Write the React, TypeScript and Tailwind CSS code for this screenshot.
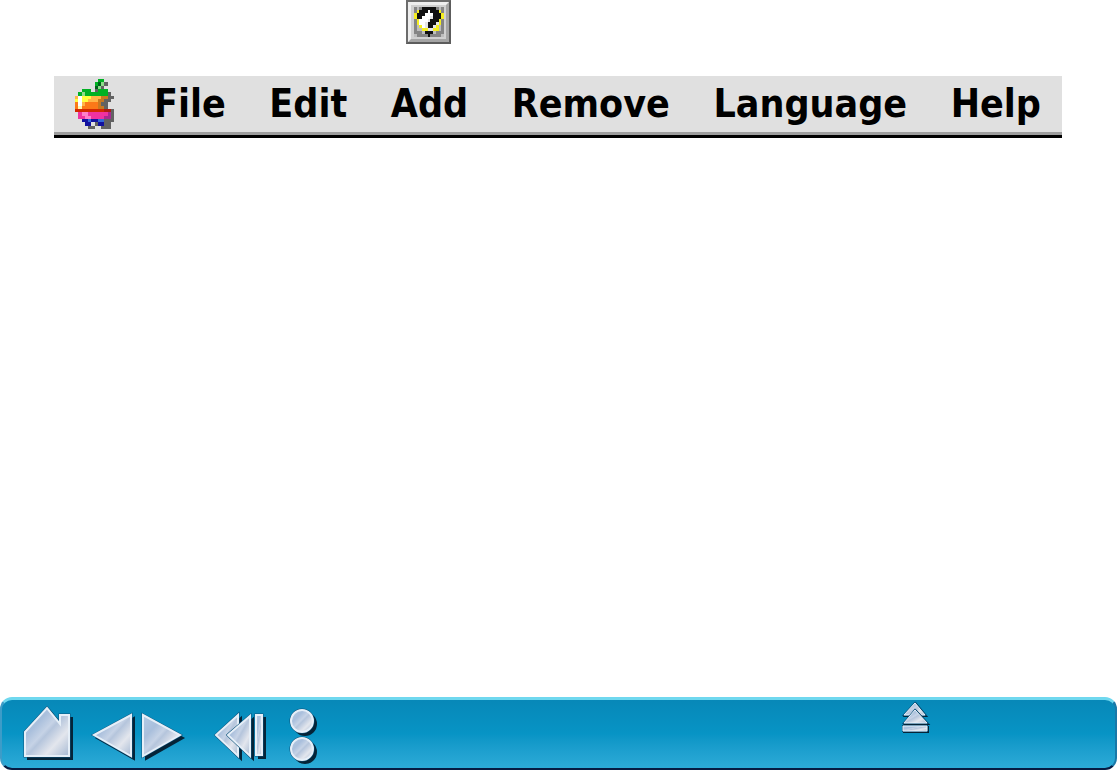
import type { ReactNode } from "react";

const palette: Record<string, string> = {
  G: "#00b123",
  D: "#00601a",
  L: "#8edb8a",
  K: "#626262",
  Y: "#ffff3c",
  y: "#fff9b0",
  W: "#ffffff",
  o: "#ffb545",
  O: "#fc7818",
  B: "#c87820",
  R: "#d42800",
  r: "#b01c10",
  M: "#f032a0",
  m: "#ff80cc",
  P: "#a82890",
  U: "#1212a0",
  u: "#3468d8",
  k: "#101010",
  g: "#858585",
  s: "#bdbdbd",
  v: "#e6e6e6",
  e: "#f4ee20",
};

const apple = [
  ".......GG...",
  "......GDLK..",
  "......DLK...",
  "..GGG.KGGG..",
  ".GLGGGGGGGK.",
  "oWYYYoooBBKK",
  "YWYYoooBBKK.",
  "OWoOOOOBKK..",
  "OyOOOOOBBK..",
  "RRRRRRRRRrrK",
  ".MmmMMMMMMPK",
  ".MMmmMMMMPPK",
  "..UUuUUuuKKK",
  "...UU.KUUKK.",
  "....KK..KKK.",
];

const question = [
  "gsgkkkkkgsg",
  "gekkkWkkkeg",
  "ekkkWWWkkke",
  "ekkWWWvkkke",
  "geWWWvkkkeg",
  "geWWvkkkveg",
  "gseWvkkvesg",
  "gsseevveesg",
  "gggskkksggg",
  "sggggkggggs",
];

function PixelArt({ rows, className }: { rows: string[]; className: string }) {
  return (
    <svg
      viewBox={`0 0 ${rows[0].length} ${rows.length}`}
      preserveAspectRatio="none"
      shapeRendering="crispEdges"
      className={className}
      aria-hidden="true"
    >
      {rows.flatMap((row, y) =>
        [...row].map((c, x) =>
          c === "." ? null : (
            <rect key={`${x}-${y}`} x={x} y={y} width="1" height="1" fill={palette[c]} />
          ),
        ),
      )}
    </svg>
  );
}

function NavButton({
  label,
  className,
  viewBox,
  children,
}: {
  label: string;
  className: string;
  viewBox: string;
  children: ReactNode;
}) {
  return (
    <button type="button" aria-label={label} className={`block shrink-0 ${className}`}>
      <svg viewBox={viewBox} className="block size-full overflow-visible" aria-hidden="true">
        {children}
      </svg>
    </button>
  );
}

function Metal({ d, offset = 3, stroke = 2 }: { d: string; offset?: number; stroke?: number }) {
  return (
    <>
      <path d={d} fill="#052438" stroke="#052438" strokeWidth="2" transform={`translate(${offset} ${offset})`} />
      <path d={d} fill="#0c527c" stroke="#0c527c" strokeWidth={stroke + 1} />
      <path d={d} fill="url(#metal)" stroke="#e6eff8" strokeWidth={stroke} />
    </>
  );
}

const menus = ["File", "Edit", "Add", "Remove", "Language", "Help"];

export default function App() {
  return (
    <div className="flex min-h-screen flex-col bg-white">
      <svg className="absolute size-0" aria-hidden="true">
        <defs>
          <linearGradient id="metal" x1="0" y1="0" x2="1" y2="1">
            <stop offset="0" stopColor="#b4cbe5" />
            <stop offset="0.3" stopColor="#a9bfdc" />
            <stop offset="0.46" stopColor="#c6d3e6" />
            <stop offset="0.52" stopColor="#b5c5dc" />
            <stop offset="0.72" stopColor="#e3e6ed" />
            <stop offset="1" stopColor="#a6b9d3" />
          </linearGradient>
        </defs>
      </svg>

      <header className="flex flex-col gap-8">
        <div className="flex px-[406px]">
          <button
            type="button"
            aria-label="Balloon help"
            className="flex h-11 w-[45px] shrink-0 border-2 border-t-[#6c6c6c] border-r-[#5c5c5c] border-b-[#5c5c5c] border-l-[#6c6c6c]"
          >
            <span className="flex size-full items-center justify-center border-3 border-t-[#eeeeee] border-r-[#a4a4a4] border-b-[#a4a4a4] border-l-[#eeeeee] bg-[#d0d0d0]">
              <PixelArt rows={question} className="h-[30px] w-[30px]" />
            </span>
          </button>
        </div>

        <nav
          aria-label="Main menu"
          className="mr-[55px] ml-[54px] flex h-[62px] items-start border-b-3 border-black bg-[#e0e0e0] px-[21px] shadow-[inset_0_-3px_0_#9e9e9e]"
        >
          <button type="button" aria-label="Apple menu" className="mt-[3px] mr-10 shrink-0">
            <PixelArt rows={apple} className="block h-[50px] w-[39px]" />
          </button>
          <div className="flex flex-1 justify-between">
            {menus.map((name) => (
              <button
                key={name}
                type="button"
                className="h-14 font-['DejaVu_Sans_Condensed','DejaVu_Sans',sans-serif] text-[39px] leading-[56px] font-bold text-black"
              >
                {name}
              </button>
            ))}
          </div>
        </nav>
      </header>

      <main className="flex-1" />

      <footer className="flex h-[73px] items-start rounded-xl border-2 border-t-3 border-t-[#6fd8ef] border-r-[#1878a8] border-b-[#061b42] border-l-[#3c9cc8] bg-linear-to-b from-[#0788b8] via-[#0794c5] to-[#2cabd8] pl-[22px]">
        <NavButton label="Home" className="mt-[6px] mr-[18px] h-[54px] w-[50px]" viewBox="0 0 50 54">
          <Metal d="M1 26 L23 2 L36 18 V9 H45 V50 H1 Z" />
        </NavButton>
        <NavButton label="Previous" className="mt-[14px] mr-[5px] h-[46px] w-[44px]" viewBox="0 0 44 46">
          <Metal d="M2 21 L39 1 V42 Z" />
        </NavButton>
        <NavButton label="Next" className="mt-[14px] mr-[29px] h-[46px] w-[44px]" viewBox="0 0 44 46">
          <Metal d="M2 1 L39 21 L2 42 Z" />
        </NavButton>
        <NavButton label="Back to start" className="mt-[14px] mr-[21px] h-[46px] w-[53px]" viewBox="0 0 53 46">
          <Metal d="M2 21 L24 1 V42 Z" />
          <Metal d="M14 21 L36 2 V42 Z" />
          <Metal d="M42 1 H48 V41 H42 Z" />
        </NavButton>
        <div className="mt-[8px] flex shrink-0 flex-col gap-px">
          {["Upper", "Lower"].map((name) => (
            <NavButton key={name} label={name} className="h-[27px] w-[30px]" viewBox="0 0 30 27">
              <Metal d="M3 13 A11 11 0 0 1 25 13 A11 11 0 0 1 3 13 Z" />
            </NavButton>
          ))}
        </div>
        <NavButton label="Up" className="mt-px mr-[183px] ml-auto h-[34px] w-[31px]" viewBox="0 0 31 34">
          <Metal d="M14 2 L24 14 H3 Z" offset={1} stroke={1} />
          <Metal d="M14 9 L26 22 H3 Z" offset={1} stroke={1} />
          <Metal d="M2 25 H26 V30 H2 Z" offset={1} stroke={1} />
        </NavButton>
      </footer>
    </div>
  );
}
